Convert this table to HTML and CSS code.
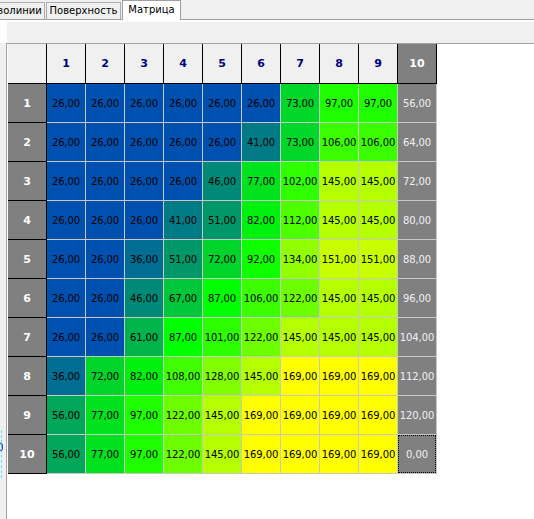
FILE: index.html
```html
<!DOCTYPE html>
<html lang="ru">
<head>
<meta charset="utf-8">
<title>Матрица</title>
<link rel="stylesheet" href="styles.css">
</head>
<body>
<div class="tabbar">
  <div class="tab tab-first">Изолинии</div>
  <div class="tab tab-second">Поверхность</div>
  <div class="tab tab-active">Матрица</div>
</div>
<div class="panel">
  <div class="topstrip">
    <div class="topgap"></div>
    <div class="toolbar"></div>
  </div>
  <div class="lower">
    <div class="gutter">
      <span class="edge-mark"></span>
      <span class="edge-glyph"></span>
    </div>
    <div class="gridframe">
      <div class="grid">
        <div class="corner"></div>
        <div class="h">1</div><div class="h">2</div><div class="h">3</div><div class="h">4</div><div class="h">5</div><div class="h">6</div><div class="h">7</div><div class="h">8</div><div class="h">9</div><div class="h h-sum">10</div>

        <div class="r">1</div>
        <div class="d c26">26,00</div><div class="d c26">26,00</div><div class="d c26">26,00</div><div class="d c26">26,00</div><div class="d c26">26,00</div><div class="d c26">26,00</div><div class="d c73">73,00</div><div class="d c97">97,00</div><div class="d c97">97,00</div><div class="d t">56,00</div>

        <div class="r">2</div>
        <div class="d c26">26,00</div><div class="d c26">26,00</div><div class="d c26">26,00</div><div class="d c26">26,00</div><div class="d c26">26,00</div><div class="d c41">41,00</div><div class="d c73">73,00</div><div class="d c106">106,00</div><div class="d c106">106,00</div><div class="d t">64,00</div>

        <div class="r">3</div>
        <div class="d c26">26,00</div><div class="d c26">26,00</div><div class="d c26">26,00</div><div class="d c26">26,00</div><div class="d c46">46,00</div><div class="d c77">77,00</div><div class="d c102">102,00</div><div class="d c145">145,00</div><div class="d c145">145,00</div><div class="d t">72,00</div>

        <div class="r">4</div>
        <div class="d c26">26,00</div><div class="d c26">26,00</div><div class="d c26">26,00</div><div class="d c41">41,00</div><div class="d c51">51,00</div><div class="d c82">82,00</div><div class="d c112">112,00</div><div class="d c145">145,00</div><div class="d c145">145,00</div><div class="d t">80,00</div>

        <div class="r">5</div>
        <div class="d c26">26,00</div><div class="d c26">26,00</div><div class="d c36">36,00</div><div class="d c51">51,00</div><div class="d c72">72,00</div><div class="d c92">92,00</div><div class="d c134">134,00</div><div class="d c151">151,00</div><div class="d c151">151,00</div><div class="d t">88,00</div>

        <div class="r">6</div>
        <div class="d c26">26,00</div><div class="d c26">26,00</div><div class="d c46">46,00</div><div class="d c67">67,00</div><div class="d c87">87,00</div><div class="d c106">106,00</div><div class="d c122">122,00</div><div class="d c145">145,00</div><div class="d c145">145,00</div><div class="d t">96,00</div>

        <div class="r">7</div>
        <div class="d c26">26,00</div><div class="d c26">26,00</div><div class="d c61">61,00</div><div class="d c87">87,00</div><div class="d c101">101,00</div><div class="d c122">122,00</div><div class="d c145">145,00</div><div class="d c145">145,00</div><div class="d c145">145,00</div><div class="d t">104,00</div>

        <div class="r">8</div>
        <div class="d c36">36,00</div><div class="d c72">72,00</div><div class="d c82">82,00</div><div class="d c108">108,00</div><div class="d c128">128,00</div><div class="d c145">145,00</div><div class="d c169">169,00</div><div class="d c169">169,00</div><div class="d c169">169,00</div><div class="d t">112,00</div>

        <div class="r">9</div>
        <div class="d c56">56,00</div><div class="d c77">77,00</div><div class="d c97">97,00</div><div class="d c122">122,00</div><div class="d c145">145,00</div><div class="d c169">169,00</div><div class="d c169">169,00</div><div class="d c169">169,00</div><div class="d c169">169,00</div><div class="d t">120,00</div>

        <div class="r">10</div>
        <div class="d c56">56,00</div><div class="d c77">77,00</div><div class="d c97">97,00</div><div class="d c122">122,00</div><div class="d c145">145,00</div><div class="d c169">169,00</div><div class="d c169">169,00</div><div class="d c169">169,00</div><div class="d c169">169,00</div><div class="d t focus">0,00</div>
      </div>
    </div>
  </div>
</div>
</body>
</html>
```

FILE: styles.css
```css
html, body {
  margin: 0;
  padding: 0;
}
body {
  width: 534px;
  height: 519px;
  overflow: hidden;
  background: #ffffff;
  font-family: "DejaVu Sans", "Liberation Sans", sans-serif;
  font-size: 10px;
  color: #000000;
}

/* ---------- tabs ---------- */
.tabbar {
  height: 19px;
  border-bottom: 1px solid #a0a0a0;
  background: #f0f0f0;
  display: flex;
  align-items: flex-end;
}
.tab {
  box-sizing: border-box;
  height: 17px;
  border: 1px solid #acacac;
  border-bottom: none;
  background: #f0f0f0;
  text-align: center;
  line-height: 16px;
  white-space: nowrap;
  overflow: hidden;
  margin-right: 1px;
}
.tab-first {
  width: 58px;
  margin-left: -13px;
}
.tab-second {
  width: 75px;
}
.tab-active {
  width: 59px;
  height: 20px;
  margin-bottom: -1px;
  border-color: #a0a0a0;
  background: #ffffff;
  line-height: 18px;
}

/* ---------- panel ---------- */
.panel {
  display: flex;
  flex-direction: column;
  height: 499px;
}
.topstrip {
  display: flex;
  height: 23px;
}
.topgap {
  width: 7px;
  background: #ffffff;
}
.toolbar {
  flex: 1;
  margin-top: 2px;
  background: #f0f0f0;
}
.lower {
  flex: 1;
  display: flex;
}
.gutter {
  width: 6px;
  background: #f0f0f0;
  position: relative;
}
.edge-mark {
  position: absolute;
  left: 1px;
  top: 387px;
  height: 48px;
  border-left: 1px dashed #5fe3ee;
}
.edge-glyph {
  position: absolute;
  left: 0;
  top: 400px;
  width: 2px;
  height: 6px;
  border: 1px solid #2040c0;
  border-left: none;
  border-radius: 0 3px 3px 0;
}
.gridframe {
  flex: 1;
  border-top: 1px solid #a0a0a0;
  border-left: 1px solid #a0a0a0;
  padding-left: 1px;
  background: #ffffff;
}

/* ---------- grid ---------- */
.grid {
  display: grid;
  grid-template-columns: repeat(11, 39px);
  grid-template-rows: 40px repeat(10, 39px);
}
.grid > div {
  box-sizing: border-box;
  border-right: 1px solid #000000;
  border-bottom: 1px solid #000000;
  display: flex;
  align-items: center;
  justify-content: center;
  white-space: nowrap;
}
.corner {
  background: #f0f0f0;
}
.h {
  background: #f0f0f0;
  color: #000080;
  font-weight: bold;
  font-size: 11px;
}
.h-sum {
  background: #808080;
  color: #ffffff;
}
.r {
  background: #808080;
  color: #ffffff;
  font-weight: bold;
  font-size: 11px;
}
.grid > .d {
  border-right-color: #c8c8c8;
  border-bottom-color: #c8c8c8;
  letter-spacing: -0.1px;
}
.t {
  background: #808080;
  color: #eef0f6;
}
.focus {
  position: relative;
}
.focus::after {
  content: "";
  position: absolute;
  inset: 0;
  border: 1px dotted #000000;
}

/* ---------- value colours ---------- */
.c26 { background: #0050b0; }
.c36 { background: #006d93; }
.c41 { background: #007b85; }
.c46 { background: #008976; }
.c51 { background: #009868; }
.c56 { background: #00a659; }
.c61 { background: #00b44b; }
.c67 { background: #00c63a; }
.c72 { background: #00d42b; }
.c73 { background: #00d728; }
.c77 { background: #00e21d; }
.c82 { background: #00f10e; }
.c87 { background: #00ff00; }
.c92 { background: #10ff00; }
.c97 { background: #1fff00; }
.c101 { background: #2cff00; }
.c102 { background: #2fff00; }
.c106 { background: #3bff00; }
.c108 { background: #41ff00; }
.c112 { background: #4eff00; }
.c122 { background: #6dff00; }
.c128 { background: #80ff00; }
.c134 { background: #92ff00; }
.c145 { background: #b4ff00; }
.c151 { background: #c7ff00; }
.c169 { background: #ffff00; }
```
